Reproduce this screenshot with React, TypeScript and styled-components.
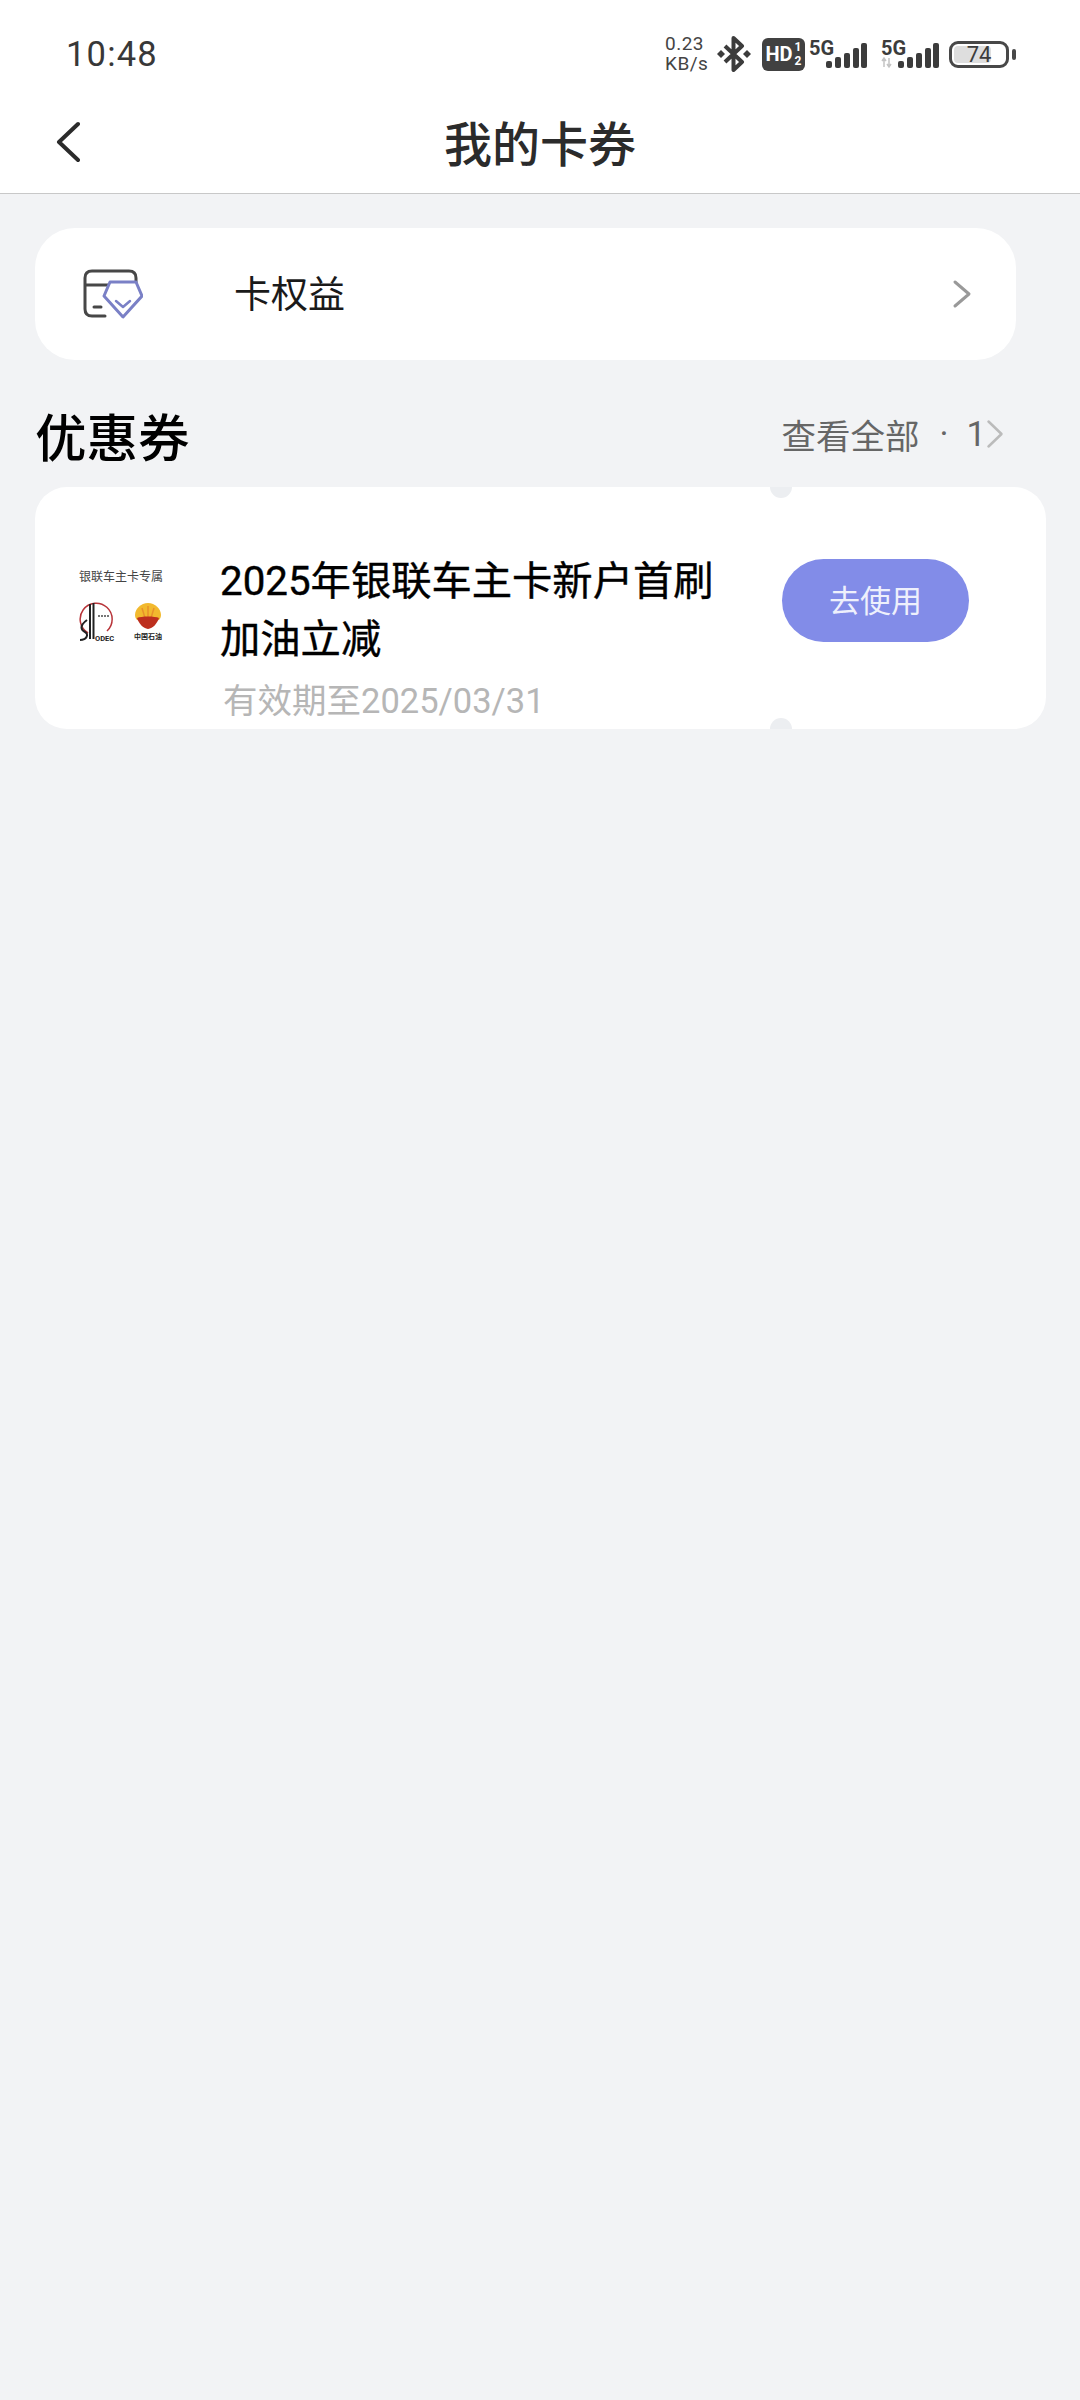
import React from "react";
import styled, { createGlobalStyle } from "styled-components";

const GlobalStyle = createGlobalStyle`
  html, body {
    margin: 0;
    padding: 0;
    background: #f2f3f5;
  }
  body {
    font-family: Roboto, "Noto Sans CJK SC", sans-serif;
  }
  * {
    box-sizing: border-box;
  }
`;

const Page = styled.div`
  width: 1080px;
  height: 2400px;
  background: #f2f3f5;
  overflow: hidden;
`;

const Top = styled.header`
  background: #fff;
  border-bottom: 1.5px solid #c8c8c8;
`;

const StatusBar = styled.div`
  display: flex;
  align-items: center;
  justify-content: space-between;
  height: 100px;
  padding: 8px 71px 0 66px;
`;

const Time = styled.span`
  font-size: 34.5px;
  font-weight: 400;
  letter-spacing: 1.2px;
  color: #383838;
`;

const StatusIcons = styled.div`
  display: flex;
  align-items: center;
`;

const Speed = styled.div`
  display: flex;
  flex-direction: column;
  width: 42px;
  margin-right: 10px;
  font-size: 19px;
  line-height: 20px;
  letter-spacing: 0.5px;
  color: #444;
`;

const HdBadge = styled.div`
  display: flex;
  align-items: center;
  justify-content: center;
  gap: 2px;
  width: 43px;
  height: 33px;
  margin: 0 4px 0 11px;
  border-radius: 6px;
  background: #414141;
  color: #fff;
  font-size: 20px;
  font-weight: 700;
`;

const HdSim = styled.div`
  display: flex;
  flex-direction: column;
  font-size: 12px;
  line-height: 14px;
`;

const Battery = styled.div`
  position: relative;
  display: flex;
  align-items: center;
  justify-content: center;
  width: 60px;
  height: 27px;
  margin-left: 10px;
  border: 3px solid #484848;
  border-radius: 9px;
  font-size: 22px;
  color: #3c3c3c;
  &::before {
    content: "";
    position: absolute;
    left: 2px;
    top: 2px;
    bottom: 2px;
    width: 68%;
    border-radius: 4px;
    background: #dedede;
  }
  &::after {
    content: "";
    position: absolute;
    right: -10px;
    top: 5px;
    width: 4px;
    height: 11px;
    border-radius: 2px;
    background: #484848;
  }
`;

const BatteryLevel = styled.span`
  position: relative;
`;

const NavBar = styled.nav`
  position: relative;
  display: flex;
  align-items: center;
  justify-content: center;
  height: 93px;
  padding-bottom: 12px;
`;

const BackButton = styled.svg`
  position: absolute;
  left: 54px;
  top: 21px;
`;

const Title = styled.h1`
  margin: 0;
  font-size: 48px;
  font-weight: 500;
  color: #2b2b2b;
`;

const Content = styled.main`
  padding: 34px 34px 0 35px;
`;

const BenefitCard = styled.section`
  display: flex;
  align-items: center;
  width: 981px;
  height: 132px;
  padding: 0 44px 0 48px;
  border-radius: 40px;
  background: #fff;
`;

const BenefitLabel = styled.span`
  flex: 1;
  margin: 0 0 4px 91px;
  font-size: 37px;
  color: #1a1a1a;
`;

const SectionHead = styled.div`
  display: flex;
  align-items: center;
  justify-content: space-between;
  height: 127px;
  padding-top: 21px;
  padding-right: 42px;
`;

const SectionTitle = styled.h2`
  margin: 0;
  font-size: 51.5px;
  font-weight: 500;
  color: #000;
`;

const ViewAll = styled.div`
  display: flex;
  align-items: center;
  font-size: 34.5px;
  color: #666;
`;

const Dot = styled.span`
  margin: 0 18px 0 20px;
`;

const CouponCard = styled.section`
  position: relative;
  display: flex;
  width: 1011px;
  height: 242px;
  border-radius: 32px;
  background: #fff;
  overflow: hidden;
`;

const Notch = styled.span<{ $side: "top" | "bottom" }>`
  position: absolute;
  left: 735px;
  ${(props) => props.$side}: -11px;
  width: 22px;
  height: 22px;
  border-radius: 50%;
  background: #eceef1;
`;

const Logo = styled.div`
  display: flex;
  flex-direction: column;
  align-items: center;
  width: 84px;
  margin: 83px 0 0 44px;
`;

const LogoCaption = styled.span`
  font-size: 12px;
  line-height: 14px;
  white-space: nowrap;
  color: #444;
`;

const LogoMarks = styled.div`
  display: flex;
  justify-content: space-between;
  width: 100%;
  margin-top: 18px;
`;

const CouponBody = styled.div`
  width: 500px;
  margin: 66px 0 0 57px;
`;

const CouponName = styled.div`
  font-size: 40.3px;
  font-weight: 400;
  line-height: 58px;
  -webkit-text-stroke: 0.4px #000;
  color: #000;
`;

const CouponDate = styled.div`
  margin: 2px 0 0 3px;
  font-size: 34.5px;
  line-height: 60px;
  color: #b6b6b6;
`;

const UseButton = styled.button`
  flex: none;
  align-self: flex-start;
  width: 187px;
  height: 83px;
  margin: 72px 0 0 62px;
  padding: 0 0 4px;
  border: 0;
  border-radius: 42px;
  background: #828ce8;
  color: #eef0fc;
  font-family: inherit;
  font-size: 31px;
`;

const Chevron = ({ w, h, color, sw }: { w: number; h: number; color: string; sw: number }) => (
  <svg width={w} height={h} viewBox={`0 0 ${w} ${h}`} fill="none">
    <path
      d={`M${sw} ${sw}L${w - sw} ${h / 2}L${sw} ${h - sw}`}
      stroke={color}
      strokeWidth={sw}
      strokeLinecap="round"
      strokeLinejoin="round"
    />
  </svg>
);

const Bluetooth = () => (
  <svg width="34" height="36" viewBox="0 0 34 36" fill="none">
    <path d="M8 10L25 26L16.500 34V2L25 10L8 26" stroke="#3c3c3c" strokeWidth="4" strokeLinejoin="round" />
    <path d="M4 14L8 18L4 22L0 18Z M30 14L34 18L30 22L26 18Z" fill="#3c3c3c" />
  </svg>
);

const Signal = ({ arrows }: { arrows?: boolean }) => (
  <svg width="58" height="40" viewBox="0 -6 58 40" style={{ marginLeft: arrows ? 14 : 0 }}>
    <text x="0" y="15" fontFamily="Roboto, sans-serif" fontSize="20" fontWeight="700" fill="#3c3c3c">
      5G
    </text>
    {arrows && <path d="M3 27V19M1 21L3 18L5 21M8 18V26M6 24L8 27L10 24" stroke="#c4c4c4" strokeWidth="1.500" fill="none" />}
    <rect x="17" y="21" width="6" height="7" rx="2" fill="#3c3c3c" />
    <rect x="26" y="17" width="6" height="11" rx="2" fill="#3c3c3c" />
    <rect x="35" y="13" width="6" height="15" rx="2" fill="#3c3c3c" />
    <rect x="44" y="8" width="6" height="20" rx="2" fill="#3c3c3c" />
    <rect x="52" y="3" width="6" height="25" rx="2" fill="#3c3c3c" />
  </svg>
);

const CardIcon = () => (
  <svg width="60" height="50" viewBox="0 0 60 50" fill="none">
    <path
      d="M22 47H9Q2 47 2 40V9Q2 2 9 2H46Q53 2 53 9V14"
      stroke="#474747"
      strokeWidth="3"
      strokeLinecap="round"
    />
    <path d="M2 16H26" stroke="#474747" strokeWidth="3" />
    <path d="M11 38H18" stroke="#474747" strokeWidth="3" strokeLinecap="round" />
    <path
      d="M27 13H53L59 27L40 48L21 27Z"
      fill="#fff"
      stroke="#7a80c6"
      strokeWidth="3"
      strokeLinejoin="round"
    />
    <path d="M33 32L40 38L47 32" stroke="#7a80c6" strokeWidth="2.500" strokeLinecap="round" strokeLinejoin="round" />
  </svg>
);

const SinopecMark = () => (
  <svg width="36" height="40" viewBox="0 0 36 40" fill="none">
    <path d="M9 31A16 16 0 1 1 28 29" stroke="#b8353a" strokeWidth="1.500" />
    <path d="M11 2V37M14.500 1V37" stroke="#222" strokeWidth="2" />
    <path d="M19 14H31" stroke="#777" strokeWidth="2" strokeDasharray="2 1" />
    <path d="M8 18C0 24 2 28 6 30C10 32 8 38 1 38" stroke="#222" strokeWidth="2" />
    <text x="16" y="39" fontFamily="Roboto, sans-serif" fontSize="7.500" fontWeight="700" fill="#222">
      ODEC
    </text>
  </svg>
);

const PetroChinaMark = () => (
  <svg width="30" height="38" viewBox="0 0 30 38" fill="none">
    <path d="M15 1C22 1 28 7 28 13C28 15 27 17 26 18H4C3 17 2 15 2 13C2 7 8 1 15 1Z" fill="#f2b92e" />
    <path d="M15 4V16M9 6L12 16M21 6L18 16" stroke="#e8912a" strokeWidth="1.500" />
    <path d="M4 16C8 14 22 14 26 16C24 22 20 26 15 27C10 26 6 22 4 16Z" fill="#bd2f1e" />
    <text x="1" y="37" fontFamily="'Noto Sans CJK SC', sans-serif" fontSize="7" fontWeight="700" fill="#222">
      中国石油
    </text>
  </svg>
);

export default function App() {
  return (
    <Page>
      <GlobalStyle />
      <Top>
        <StatusBar>
          <Time>10:48</Time>
          <StatusIcons>
            <Speed>
              <span>0.23</span>
              <span>KB/s</span>
            </Speed>
            <Bluetooth />
            <HdBadge>
              HD
              <HdSim>
                <span>1</span>
                <span>2</span>
              </HdSim>
            </HdBadge>
            <Signal />
            <Signal arrows />
            <Battery>
              <BatteryLevel>74</BatteryLevel>
            </Battery>
          </StatusIcons>
        </StatusBar>
        <NavBar>
          <BackButton width="26" height="42" viewBox="0 0 26 42" fill="none">
            <path d="M24 3L5 21L24 39" stroke="#2b2b2b" strokeWidth="4" strokeLinecap="round" strokeLinejoin="round" />
          </BackButton>
          <Title>我的卡券</Title>
        </NavBar>
      </Top>
      <Content>
        <BenefitCard>
          <CardIcon />
          <BenefitLabel>卡权益</BenefitLabel>
          <Chevron w={20} h={30} color="#999" sw={3} />
        </BenefitCard>
        <SectionHead>
          <SectionTitle>优惠券</SectionTitle>
          <ViewAll>
            查看全部
            <Dot>·</Dot>
            1
            <Chevron w={18} h={30} color="#bbb" sw={2.5} />
          </ViewAll>
        </SectionHead>
        <CouponCard>
          <Notch $side="top" />
          <Notch $side="bottom" />
          <Logo>
            <LogoCaption>银联车主卡专属</LogoCaption>
            <LogoMarks>
              <SinopecMark />
              <PetroChinaMark />
            </LogoMarks>
          </Logo>
          <CouponBody>
            <CouponName>2025年银联车主卡新户首刷加油立减</CouponName>
            <CouponDate>有效期至2025/03/31</CouponDate>
          </CouponBody>
          <UseButton>去使用</UseButton>
        </CouponCard>
      </Content>
    </Page>
  );
}
